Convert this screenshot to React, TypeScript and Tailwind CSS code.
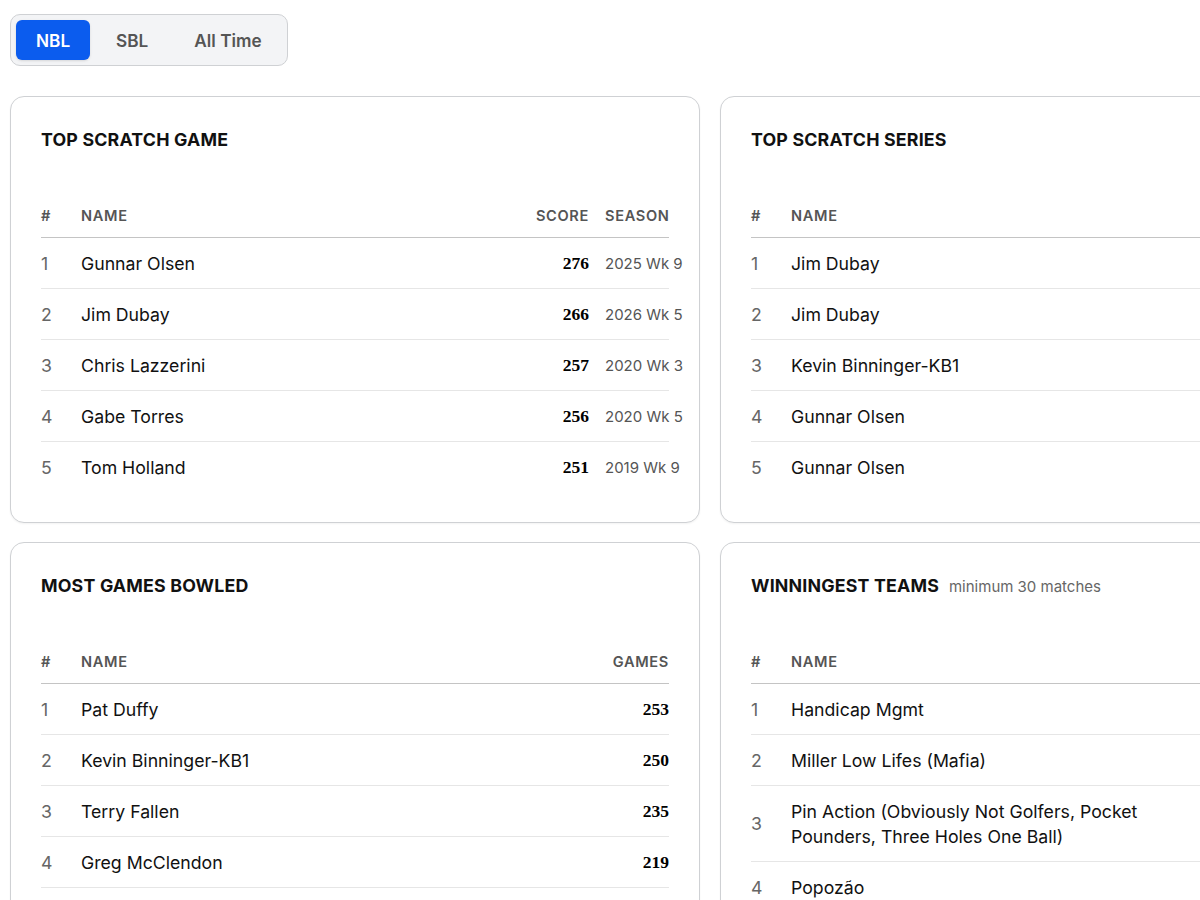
import { useState } from "react"

type Col = { key: string; label: string; kind: "num" | "text"; width?: string }

interface BoardProps {
  title: string
  note?: string
  cols: Col[]
  rows: Record<string, string | number>[]
}

const scratchGame = [
  { name: "Gunnar Olsen", score: 276, season: "2025 Wk 9" },
  { name: "Jim Dubay", score: 266, season: "2026 Wk 5" },
  { name: "Chris Lazzerini", score: 257, season: "2020 Wk 3" },
  { name: "Gabe Torres", score: 256, season: "2020 Wk 5" },
  { name: "Tom Holland", score: 251, season: "2019 Wk 9" },
]

const scratchSeries = [
  { name: "Jim Dubay", score: 713, season: "2026 Wk 5" },
  { name: "Jim Dubay", score: 702, season: "2025 Wk 2" },
  { name: "Kevin Binninger-KB1", score: 698, season: "2024 Wk 7" },
  { name: "Gunnar Olsen", score: 694, season: "2025 Wk 9" },
  { name: "Gunnar Olsen", score: 689, season: "2023 Wk 4" },
]

const gamesBowled = [
  { name: "Pat Duffy", games: 253 },
  { name: "Kevin Binninger-KB1", games: 250 },
  { name: "Terry Fallen", games: 235 },
  { name: "Greg McClendon", games: 219 },
  { name: "Jim Dubay", games: 212 },
]

const winningest = [
  { name: "Handicap Mgmt", w: 41, l: 19, pct: ".683" },
  { name: "Miller Low Lifes (Mafia)", w: 58, l: 32, pct: ".644" },
  { name: "Pin Action (Obviously Not Golfers, Pocket Pounders, Three Holes One Ball)", w: 71, l: 43, pct: ".623" },
  { name: "Popozão", w: 37, l: 23, pct: ".617" },
  { name: "Split Happens", w: 33, l: 27, pct: ".550" },
]

// 排行榜卡片
function Board({ title, note, cols, rows }: BoardProps) {
  return (
    <div className="bg-white border border-[#cfd1d4] rounded-[14px] shadow-[0_1px_2px_rgba(0,0,0,0.05)] p-[30px]">
      <div className="flex items-baseline gap-[10px] h-[25px]">
        <h2 className="text-[17.8px] leading-[25px] font-bold tracking-[0.01em] text-[#111]">{title}</h2>
        {note && <span className="text-[15px] text-[#666]">{note}</span>}
      </div>

      <div className="mt-[54px] flex items-center pb-[11px] border-b border-[#c4c4c4] text-[14.6px] leading-[20px] font-semibold tracking-[0.045em] text-[#555]">
        <span className="w-10 shrink-0">#</span>
        <span className="flex-1">NAME</span>
        {cols.map((c) => (
          <span
            key={c.key}
            className={`ml-4 whitespace-nowrap ${c.kind === "num" ? "text-right" : "text-left"} ${c.width ?? ""}`}
          >
            {c.label}
          </span>
        ))}
      </div>

      {rows.map((r, i) => (
        <div
          key={i}
          className={`flex items-center py-[12.5px] leading-[25px] ${i < rows.length - 1 ? "border-b border-[#e6e6e6]" : ""}`}
        >
          <span className="w-10 shrink-0 text-[17.7px] text-[#666]">{i + 1}</span>
          <span className="flex-1 text-[17.7px] text-[#111] pr-2">{r.name}</span>
          {cols.map((c) =>
            c.kind === "num" ? (
              <span
                key={c.key}
                className={`ml-4 text-right text-[17.5px] font-bold text-black font-['Liberation_Serif',serif] ${c.width ?? ""}`}
              >
                {r[c.key]}
              </span>
            ) : (
              <span key={c.key} className={`ml-4 whitespace-nowrap text-[15px] text-[#555] ${c.width ?? ""}`}>
                {r[c.key]}
              </span>
            )
          )}
        </div>
      ))}
    </div>
  )
}

export default function App() {
  const [league, setLeague] = useState("NBL")
  const tabs = ["NBL", "SBL", "All Time"]

  const scoreCols: Col[] = [
    { key: "score", label: "SCORE", kind: "num" },
    { key: "season", label: "SEASON", kind: "text", width: "w-16" },
  ]

  return (
    <div className="h-screen overflow-hidden bg-white font-['Inter','Noto_Sans',sans-serif] pt-[14px] px-[10px]">
      <div className="inline-flex gap-[6px] p-[5px] bg-[#f3f4f6] border border-[#cfd1d4] rounded-[10px]">
        {tabs.map((t) => (
          <button
            key={t}
            onClick={() => setLeague(t)}
            className={`h-10 px-5 pt-[1px] rounded-[6px] text-[17.2px] leading-[24px] font-semibold ${
              league === t ? "bg-[#0b5cee] text-white shadow-sm" : "text-[#555]"
            }`}
          >
            {t}
          </button>
        ))}
      </div>

      <div className="mt-[30px] grid grid-cols-[690px_690px] gap-x-[20px] gap-y-[19px] w-max">
        <Board title="TOP SCRATCH GAME" cols={scoreCols} rows={scratchGame} />
        <Board title="TOP SCRATCH SERIES" cols={scoreCols} rows={scratchSeries} />
        <Board
          title="MOST GAMES BOWLED"
          cols={[{ key: "games", label: "GAMES", kind: "num" }]}
          rows={gamesBowled}
        />
        <Board
          title="WINNINGEST TEAMS"
          note="minimum 30 matches"
          cols={[
            { key: "w", label: "W", kind: "num", width: "w-12" },
            { key: "l", label: "L", kind: "num", width: "w-12" },
            { key: "pct", label: "PCT", kind: "num", width: "w-16" },
          ]}
          rows={winningest}
        />
      </div>
    </div>
  )
}
